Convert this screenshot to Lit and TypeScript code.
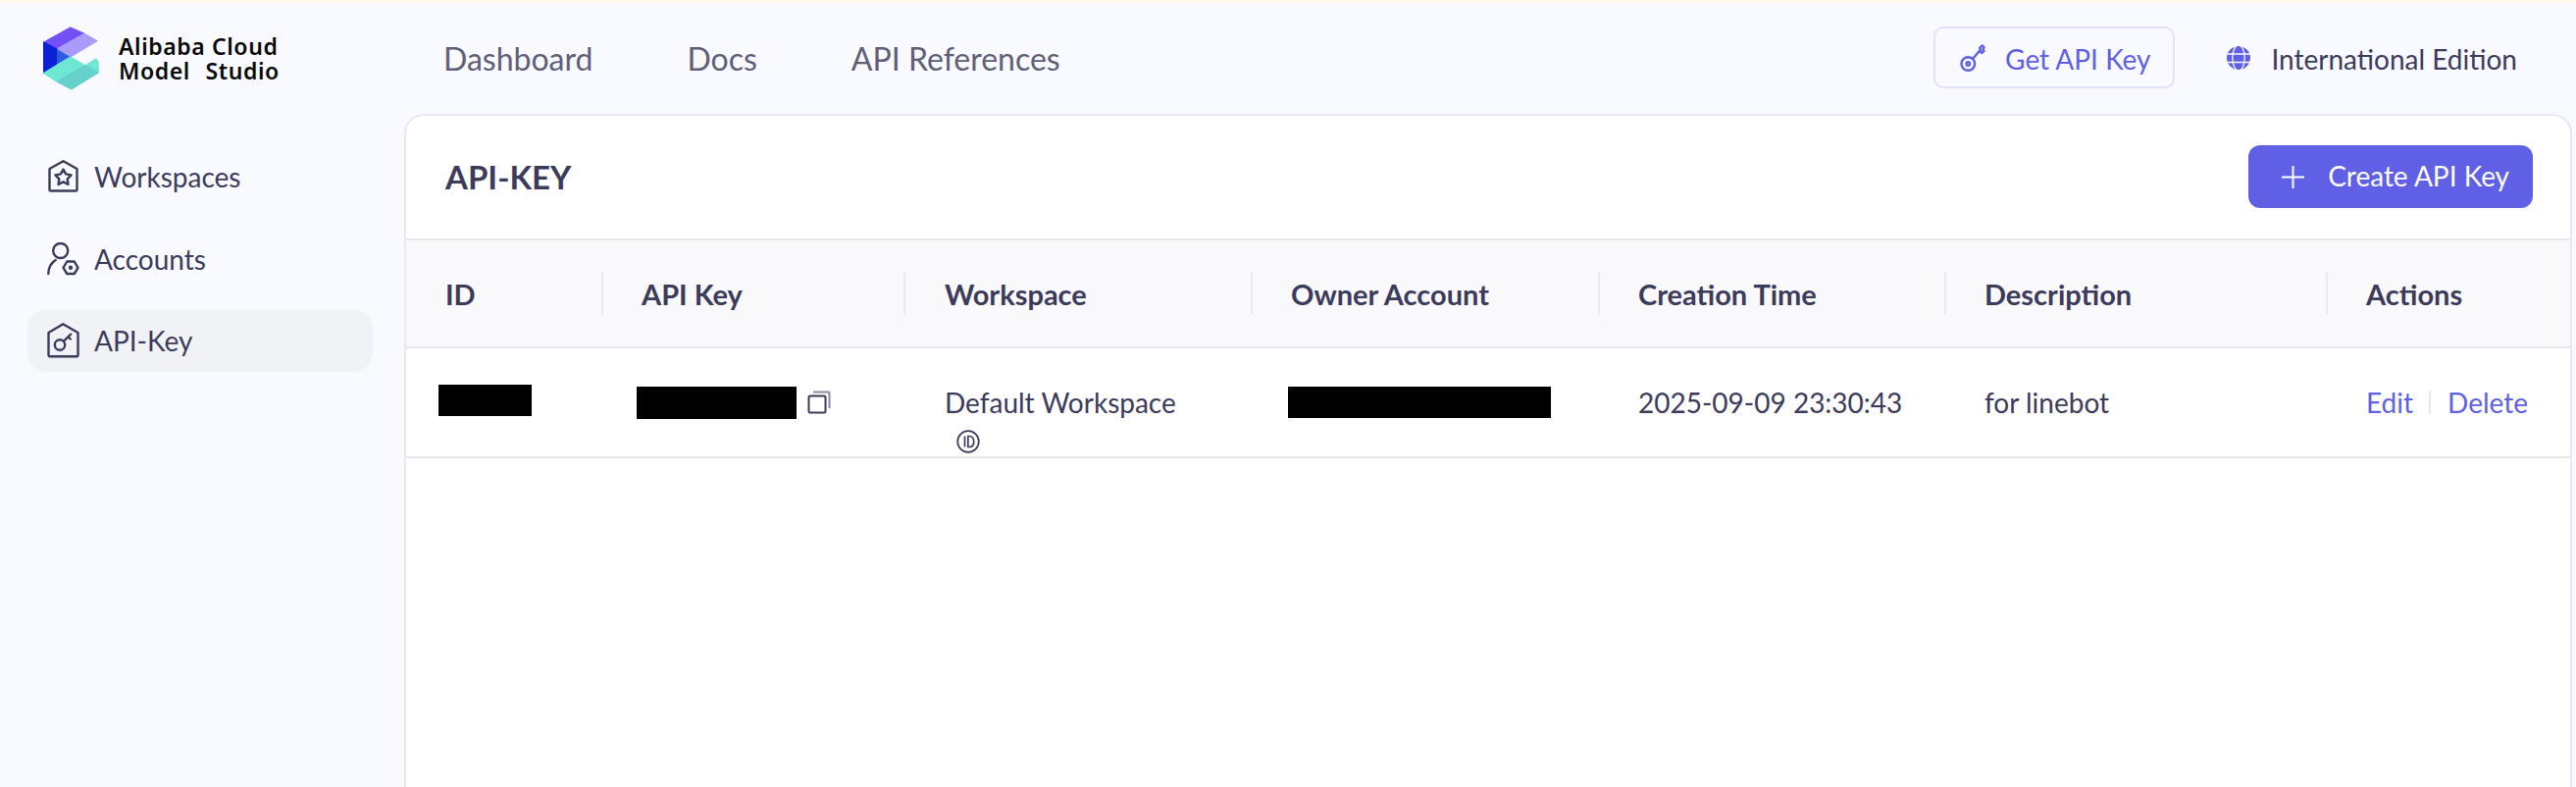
import {LitElement, html, css} from 'lit';
import {customElement} from 'lit/decorators.js';

const INK = '#3d3b5c';
const ACCENT = '#6060e6';

const workspaceIcon = html`<svg class="side-icon" width="34" height="34" viewBox="0 0 34 34" fill="none" stroke="${INK}" stroke-width="2.4" stroke-linejoin="round">
  <path d="M2.500 9 16.500 1.200 30.500 9v21a1.500 1.500 0 0 1-1.500 1.500H4A1.500 1.500 0 0 1 2.500 30z"/>
  <path d="m16.500 9.500 2.600 4.900 5.500 1-3.900 4 .8 5.500-5-2.500-5 2.500.8-5.500-3.900-4 5.500-1z"/>
</svg>`;

const accountIcon = html`<svg class="side-icon" width="34" height="34" viewBox="0 0 34 34" fill="none" stroke="${INK}" stroke-width="2.4" stroke-linecap="round" stroke-linejoin="round">
  <circle cx="13.700" cy="8.500" r="7.500"/>
  <path d="M1.300 32C1.300 26 4 21 8.700 18"/>
  <path d="M16.500 25.800 20.300 19.500h7.400l3.800 6.300-3.800 6.200h-7.400z"/>
  <circle cx="24" cy="25.800" r="1" fill="${INK}"/>
</svg>`;

const keyHouseIcon = html`<svg class="side-icon wide" width="36" height="36" viewBox="0 0 36 36" fill="none" stroke="${INK}" stroke-width="2.4" stroke-linecap="round" stroke-linejoin="round">
  <path d="M1.500 10 16.300 1.200 31.500 10v23a1.200 1.200 0 0 1-1.200 1.200H2.700A1.200 1.200 0 0 1 1.500 33z"/>
  <circle cx="13" cy="22.500" r="5.200"/>
  <path d="m17 18.700 7.200-7.200M21.500 14.200l2.300 2.300"/>
</svg>`;

const logo = html`<svg width="58" height="66" viewBox="0 0 58 66" stroke-width="1.200" stroke-linejoin="round">
  <path d="M27.700 1 42 7.300 14 23 .8 16z" fill="#7350f5" stroke="#7350f5"/>
  <path d="M42 7.300 55 14.700 27.700 31 14 23z" fill="#a99cf8" stroke="#a99cf8"/>
  <path d="M.6 16 14 23v16L.6 47z" fill="#0c22d6" stroke="#0c22d6"/>
  <path d="M14 23l13.700 8L14 38.700z" fill="#2b5bdf"/>
  <path d="M.6 47.500 27.700 31l15 8.700L14 56.300z" fill="#6ee7d4" stroke="#6ee7d4"/>
  <path d="M42.700 39.700 54 33l2.200 3v11z" fill="#6ee7d4" stroke="#6ee7d4"/>
  <path d="M14 56.300 42.700 39.700l13.500 7.300L28.700 64z" fill="#65d0cc" stroke="#65d0cc"/>
</svg>`;

const navKey = html`<svg width="26" height="30" viewBox="0 0 26 30" fill="none" stroke="${ACCENT}" stroke-width="2.400" stroke-linecap="round" stroke-linejoin="round">
  <circle cx="8.300" cy="21" r="6.800"/>
  <circle cx="8.300" cy="21" r="1.800"/>
  <path d="M13 16 21 6.500"/>
  <path d="m20 5 2.500-2.500 2 1.500-1 2.500 1 1.500-2.500 2-1.500-1.500"/>
</svg>`;

const globe = html`<svg width="24" height="24" viewBox="0 0 24 24">
  <circle cx="12" cy="12" r="12" fill="${ACCENT}"/>
  <g fill="none" stroke="#f9faff" stroke-width="1.300">
    <path d="M0 8h24M0 16.500h24"/>
    <ellipse cx="12" cy="12" rx="6.200" ry="13"/>
  </g>
</svg>`;

const copyIcon = html`<svg width="24" height="24" viewBox="0 0 24 24" fill="none" stroke-width="2">
  <rect x="1.500" y="5.500" width="17" height="17" rx="1.500" stroke="${INK}"/>
  <path d="M6 1.500h15.500a1 1 0 0 1 1 1V18" stroke="#8a89a0"/>
</svg>`;

const idIcon = html`<svg class="id-badge" width="24" height="24" viewBox="0 0 24 24" fill="none" stroke="${INK}" stroke-width="1.700">
  <circle cx="12" cy="12" r="10.800"/>
  <path d="M8.500 6.500v11M11.800 6.500v11h1.600c2.800 0 4.300-2.300 4.300-5.500s-1.500-5.500-4.300-5.500z"/>
</svg>`;

@customElement('app-root')
export class AppRoot extends LitElement {
  static styles = css`
    :host {
      display: block;
      height: 802px;
      overflow: hidden;
      background: #f9faff;
      border-top: 3px solid #fffbe8;
      box-sizing: border-box;
      font-family: Lato, "Liberation Sans", sans-serif;
      color: #3d3b5c;
      font-size: 28px;
    }
    .layout {
      display: grid;
      grid-template-columns: 412px 1fr;
      grid-template-rows: 113px 1fr;
      height: 799px;
    }
    .brand {
      display: flex;
      align-items: center;
      gap: 19px;
      padding-left: 44px;
    }
    .brand-name {
      font-family: "Noto Sans", sans-serif;
      font-weight: 600;
      font-size: 23px;
      color: #0a0a0a;
      letter-spacing: 0.6px;
    }
    .brand-name div {
      line-height: 25px;
      height: 25px;
    }
    .brand-name .wide-word {
      word-spacing: 9px;
    }
    .topbar {
      display: flex;
      align-items: center;
      padding: 0 60px 0 40px;
      margin-top: -2px;
      font-size: 32px;
      color: #5f6078;
    }
    .links {
      display: flex;
      gap: 96px;
      flex: 1;
      padding-top: 2px;
    }
    .key-btn {
      display: flex;
      align-items: center;
      gap: 20px;
      height: 63px;
      box-sizing: border-box;
      padding: 2px 23px 0 25px;
      border: 2px solid #e1e1fb;
      border-radius: 10px;
      color: #6060e6;
      font-size: 28px;
    }
    .key-btn svg {
      margin-top: -2px;
    }
    .edition {
      display: flex;
      align-items: center;
      gap: 21px;
      margin-left: 53px;
      padding-top: 2px;
      font-size: 28px;
      color: #3d3b5c;
    }
    .edition svg {
      margin-top: -2px;
    }
    .sidebar {
      padding: 32px 32px 0 28px;
      display: flex;
      flex-direction: column;
      gap: 19.500px;
    }
    .side-item {
      display: flex;
      align-items: center;
      gap: 14px;
      height: 64px;
      padding-left: 20px;
      border-radius: 20px;
    }
    .side-item.active {
      background: #f1f2f6;
    }
    .side-icon.wide {
      margin-right: -2px;
    }
    .card {
      background: #fff;
      border: 2px solid #e8e9f0;
      border-bottom: none;
      border-radius: 20px 20px 0 0;
      margin-right: 4px;
    }
    .card-head {
      display: flex;
      align-items: center;
      justify-content: space-between;
      height: 125px;
      box-sizing: border-box;
      padding: 0 38px 1px 40px;
    }
    .card-title {
      font-size: 33px;
      font-weight: 700;
    }
    .create {
      display: flex;
      align-items: center;
      gap: 24px;
      height: 64px;
      box-sizing: border-box;
      padding: 0 24px 3px 34px;
      border-radius: 12px;
      background: #6060e6;
      color: #fff;
    }
    .create svg {
      margin-top: 3px;
    }
    .row {
      display: grid;
      grid-template-columns: 199px 308px 354px 354px 353px 389px 1fr;
      align-items: center;
      border-top: 2px solid #e8e9f0;
    }
    .row.head {
      height: 108px;
      background: #f9f9fb;
      font-weight: 700;
      font-size: 29px;
    }
    .row.body {
      height: 110px;
      border-bottom: 2px solid #e8e9f0;
    }
    .cell {
      position: relative;
      padding-left: 41px;
    }
    .cell:nth-child(3) {
      padding-left: 42px;
    }
    .head .cell:first-child {
      padding-left: 40px;
    }
    .head .cell:not(:first-child)::before {
      content: "";
      position: absolute;
      left: 0;
      top: 50%;
      margin-top: -22px;
      width: 2px;
      height: 44px;
      background: #e8e9f0;
    }
    .redact {
      background: #000;
    }
    .id-cell .redact {
      width: 95px;
      height: 32px;
      margin: -4px 0 0 -8px;
    }
    .key-cell {
      display: flex;
      align-items: center;
      gap: 11px;
      padding-left: 36px;
    }
    .key-cell .redact {
      width: 163px;
      height: 33px;
    }
    .owner-cell .redact {
      width: 268px;
      height: 32px;
      margin-left: -3px;
    }
    .workspace {
      align-self: start;
      padding-top: 37px;
      line-height: 36px;
    }
    .id-badge {
      display: block;
      margin: 10px 0 0 12px;
    }
    .actions {
      display: flex;
      align-items: center;
      color: #6060e6;
    }
    .actions i {
      width: 2px;
      height: 24px;
      margin: 0 17px 0 16px;
      background: #e8e9f0;
    }
  `;

  render() {
    return html`
      <div class="layout">
        <div class="brand">
          ${logo}
          <div class="brand-name">
            <div>Alibaba Cloud</div>
            <div class="wide-word">Model Studio</div>
          </div>
        </div>
        <div class="topbar">
          <div class="links">
            <span>Dashboard</span><span>Docs</span><span>API References</span>
          </div>
          <div class="key-btn">${navKey}<span>Get API Key</span></div>
          <div class="edition">${globe}<span>International Edition</span></div>
        </div>
        <nav class="sidebar">
          <div class="side-item">${workspaceIcon}<span>Workspaces</span></div>
          <div class="side-item">${accountIcon}<span>Accounts</span></div>
          <div class="side-item active">${keyHouseIcon}<span>API-Key</span></div>
        </nav>
        <main class="card">
          <div class="card-head">
            <div class="card-title">API-KEY</div>
            <div class="create">
              <svg width="23" height="23" viewBox="0 0 23 23" stroke="#fff" stroke-width="2"><path d="M11.500 0v23M0 11.500h23"/></svg>
              <span>Create API Key</span>
            </div>
          </div>
          <div class="row head">
            ${['ID', 'API Key', 'Workspace', 'Owner Account', 'Creation Time', 'Description', 'Actions'].map(
              (t) => html`<div class="cell">${t}</div>`
            )}
          </div>
          <div class="row body">
            <div class="cell id-cell"><div class="redact"></div></div>
            <div class="cell key-cell"><div class="redact"></div>${copyIcon}</div>
            <div class="cell workspace">Default Workspace${idIcon}</div>
            <div class="cell owner-cell"><div class="redact"></div></div>
            <div class="cell">2025-09-09 23:30:43</div>
            <div class="cell">for linebot</div>
            <div class="cell actions"><span>Edit</span><i></i><span>Delete</span></div>
          </div>
        </main>
      </div>
    `;
  }
}
